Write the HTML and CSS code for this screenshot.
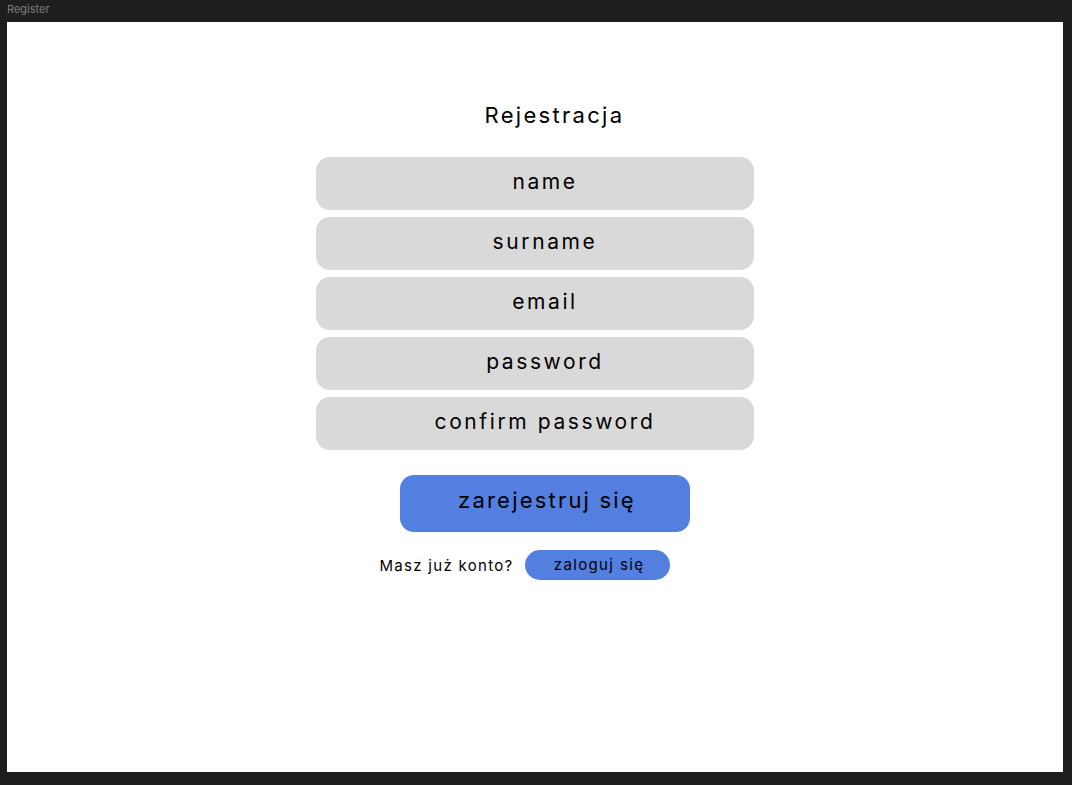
FILE: index.html
```html
<!DOCTYPE html>
<html lang="pl">
<head>
<meta charset="utf-8">
<title>Register</title>
<link rel="stylesheet" href="styles.css">
</head>
<body>
<div class="frame-label">Register</div>
<main class="canvas">
  <h1 class="title">Rejestracja</h1>
  <form class="form">
    <div class="field">name</div>
    <div class="field">surname</div>
    <div class="field">email</div>
    <div class="field">password</div>
    <div class="field">confirm password</div>
  </form>
  <button class="primary" type="button">zarejestruj się</button>
  <div class="login-row">
    <span class="login-text">Masz już konto?</span>
    <button class="secondary" type="button">zaloguj się</button>
  </div>
</main>
</body>
</html>
```

FILE: styles.css
```css
* { box-sizing: border-box; }
html, body {
  margin: 0;
  padding: 0;
  background: #1e1e1e;
  width: 1072px;
  height: 785px;
  overflow: hidden;
  font-family: Inter, "Noto Sans", sans-serif;
}
.frame-label {
  height: 22px;
  padding: 2px 0 0 7px;
  font-size: 11px;
  line-height: 14px;
  color: #7d7d7d;
}
.canvas {
  margin: 0 9px 0 7px;
  height: 750px;
  background: #ffffff;
  display: flex;
  flex-direction: column;
  align-items: center;
  padding-top: 80px;
}
.title {
  margin: 0 0 0 39px;
  font-size: 22px;
  line-height: 26px;
  font-weight: 400;
  letter-spacing: 2.3px;
  color: #000;
}
.form {
  margin-top: 29px;
  display: flex;
  flex-direction: column;
  gap: 7px;
}
.field {
  width: 438px;
  height: 53px;
  border-radius: 14px;
  background: #d9d9d9;
  display: flex;
  align-items: center;
  justify-content: center;
  padding-left: 20px;
  padding-bottom: 4px;
  font-size: 21px;
  letter-spacing: 2.6px;
  color: #000;
}
.primary {
  margin: 25px 0 0 20px;
  width: 290px;
  height: 57px;
  border: none;
  border-radius: 14px;
  background: #527fe0;
  font-family: inherit;
  font-size: 22px;
  letter-spacing: 2.2px;
  color: #000;
  padding: 0 0 8px 4px;
}
.login-row {
  margin: 18px 0 0 -21px;
  display: flex;
  align-items: center;
  gap: 11px;
}
.login-text {
  font-size: 15px;
  letter-spacing: 1.3px;
  color: #000;
}
.secondary {
  width: 145px;
  height: 30px;
  border: none;
  border-radius: 15px;
  background: #527fe0;
  font-family: inherit;
  font-size: 15px;
  letter-spacing: 1.35px;
  color: #000;
  padding: 0 0 2px 4px;
}
```
